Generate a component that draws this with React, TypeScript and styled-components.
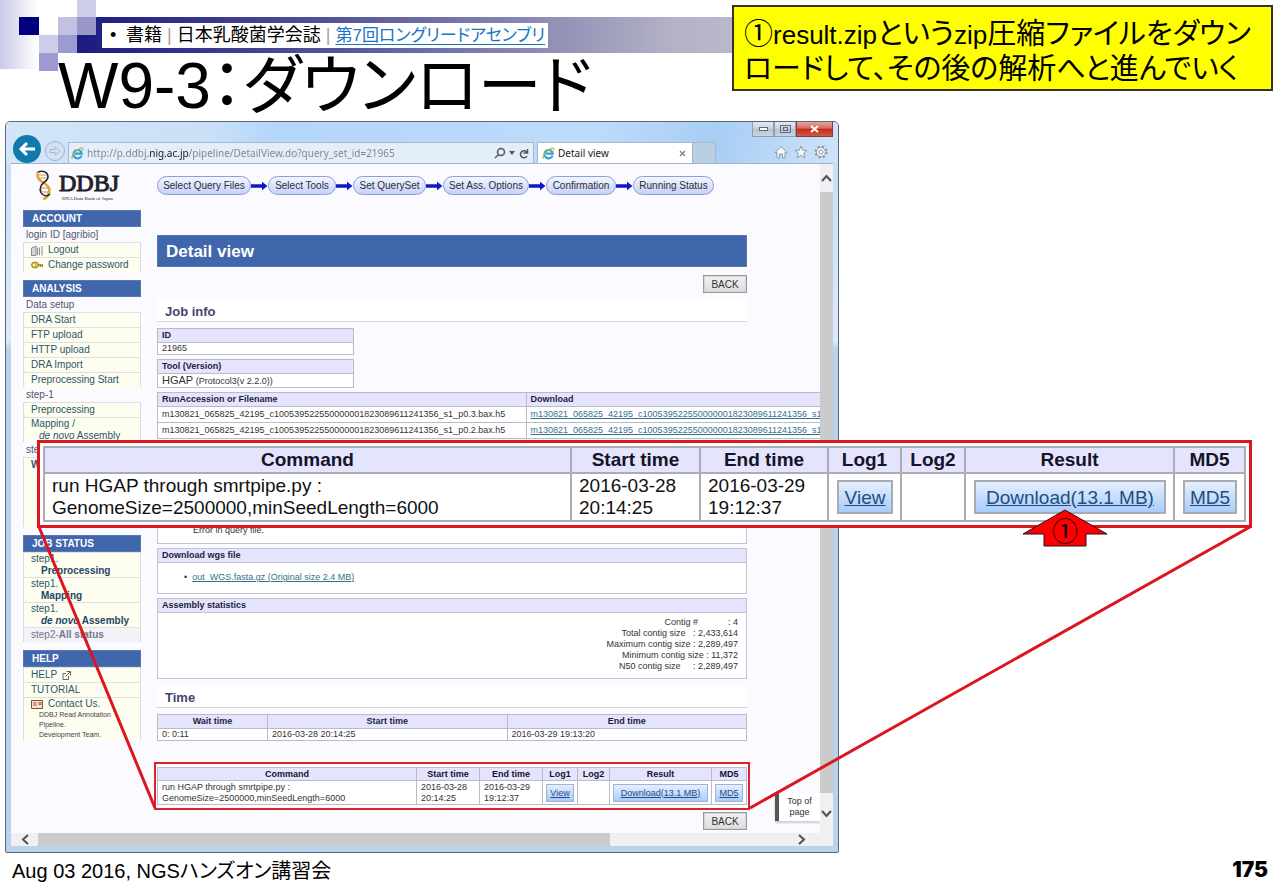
import React from "react";
import styled, { createGlobalStyle, css } from "styled-components";

const SANS = '"Liberation Sans", "Noto Sans CJK JP", sans-serif';
const UI = '"Noto Sans", "Noto Sans CJK JP", sans-serif';

const Global = createGlobalStyle`
  *, *::before, *::after { box-sizing: border-box; }
  body { margin: 0; background: #fff; font-family: ${SANS}; color: #000; }
  button { font-family: inherit; margin: 0; padding: 0; border: 0; background: none; cursor: pointer; }
  table { border-collapse: collapse; border-spacing: 0; }
  h1, h2, h3, p, ul { margin: 0; padding: 0; }
`;

/* ---------- slide ---------- */

const Slide = styled.div`
  min-height: 100vh;
  overflow: hidden;
`;

const Header = styled.header`
  position: relative;
  display: flex;
  justify-content: space-between;
  height: 121px;
`;

const Band = styled.div`
  position: absolute;
  z-index: -1;
  inset: 17px 6px auto 77px;
  height: 36px;
  background: linear-gradient(90deg, #1b1a80 0, #56559a 22%, #b3b2c6 50%, #d6d6df 75%, #fff 100%);
`;

const Mosaic = styled.svg`
  position: absolute;
  z-index: -1;
  top: 0;
  left: 0;
`;

const HeaderMain = styled.div`
  padding: 23px 0 0 58px;
`;

const Crumb = styled.p`
  display: flex;
  align-items: center;
  width: max-content;
  height: 25px;
  margin-left: 44px;
  padding: 0 3px 0 8px;
  background: #fff;
  font-size: 18px;
  line-height: 25px;
  font-feature-settings: "palt";
  white-space: pre;

  a { font-size: 17px; color: #1874c4; text-underline-offset: 3px; text-decoration-thickness: 1px; }
  i { color: #a89f94; font-style: normal; }
  b { font-weight: 400; width: 16px; }
`;

const Title = styled.h1`
  font-size: 64px;
  line-height: 76px;
  font-weight: 400;
  font-feature-settings: "palt";
  white-space: nowrap;
`;

const Note = styled.aside`
  flex: 0 0 541px;
  align-self: flex-start;
  margin: 5px 7px 0 0;
  padding: 10px 10px 3px;
  border: 2px solid #33332a;
  background: #ff0;
  font-size: 29px;
  line-height: 34px;
  font-feature-settings: "palt";
  white-space: nowrap;
`;

const Latin = styled.span`
  font-size: 26px;
`;

const Stage = styled.main`
  position: relative;
  display: grid;
  grid-template-columns: 834fr 441fr;
  padding-left: 5px;
`;

const Footer = styled.footer`
  display: flex;
  justify-content: space-between;
  align-items: center;
  height: 32px;
  padding: 0 12px;
  font-size: 20px;
  font-feature-settings: "palt";
`;

const PageNumber = styled.span`
  font-family: Inter, "DejaVu Sans", sans-serif;
  font-size: 21px;
  font-weight: 900;
`;

/* ---------- browser window ---------- */

const BrowserWindow = styled.section`
  display: flex;
  flex-direction: column;
  min-width: 0;
  padding: 0 5px 6px;
  border: 1px solid #56687a;
  border-radius: 5px 5px 2px 2px;
  background: linear-gradient(180deg, #c3dcf6 0, #dceafa 30%, #b9d3ec 31%, #b9d3ec 100%);
`;

const Chrome = styled.div`
  margin: 0 -5px;
  padding: 0 5px;
  border-radius: 4px 4px 0 0;
  background: linear-gradient(100deg, #d3e5f8 0, #c9e0f8 25%, #b4d6fb 32%, #bedbfa 70%, #a9cdf5 85%, #cfe3f8 100%);
`;

const WindowButtons = styled.div`
  display: flex;
  justify-content: flex-end;
  height: 15px;
`;

const WindowButton = styled.button<{ $close?: boolean }>`
  display: grid;
  place-items: center;
  width: ${p => (p.$close ? 37 : 22)}px;
  height: 15px;
  border: 1px solid ${p => (p.$close ? "#8c3a33" : "#8d9fb3")};
  border-top: 0;
  background: ${p =>
    p.$close
      ? "linear-gradient(180deg, #e4a79f 0, #d5685a 45%, #c02b1b 50%, #cf5a44 100%)"
      : "linear-gradient(180deg, #dfe8f2 0, #ccd6e2 45%, #b6c2d0 50%, #c9d5e2 100%)"};
`;

const NavRow = styled.div`
  display: flex;
  align-items: flex-end;
  height: 26px;
  padding-left: 2px;
`;

const RoundButton = styled.button<{ $small?: boolean }>`
  display: grid;
  place-items: center;
  flex: none;
  width: ${p => (p.$small ? 20 : 28)}px;
  height: ${p => (p.$small ? 20 : 28)}px;
  margin: ${p => (p.$small ? "0 3px 2px 4px" : "0")};
  border-radius: 50%;
  border: ${p => (p.$small ? "1px solid #9db3cc" : "0")};
  background: ${p => (p.$small ? "#d3e3f4" : "#107aad")};
`;

const AddressBar = styled.div`
  display: flex;
  align-items: center;
  flex: 1;
  min-width: 0;
  height: 21px;
  padding: 0 4px 0 2px;
  gap: 3px;
  border: 1px solid #a5bad0;
  border-bottom: 0;
  background: #e3eefa;
`;

const UrlInput = styled.input`
  flex: 1;
  min-width: 0;
  height: 18px;
  padding: 0;
  border: 0;
  outline: 0;
  font-family: ${UI};
  font-size: 10px;
  color: transparent;
  background: linear-gradient(90deg, #7d8389 0 61px, #15181c 61px 101px, #7d8389 101px);
  -webkit-background-clip: text;
  background-clip: text;
`;

const IconButton = styled.button`
  display: grid;
  place-items: center;
  flex: none;
`;

const Tab = styled.div`
  display: flex;
  align-items: center;
  gap: 3px;
  width: 156px;
  height: 21px;
  margin-left: 3px;
  padding: 0 4px 0 4px;
  border: 1px solid #a5bad0;
  border-bottom: 0;
  background: #fff;
  font-family: ${UI};
  font-size: 10px;
  color: #222;

  span { flex: 1; }
`;

const NewTab = styled.button`
  flex: none;
  width: 23px;
  height: 21px;
  border: 1px solid #a5bad0;
  border-left: 0;
  border-bottom: 0;
  background: #b8cfe4;
`;

const Tools = styled.div`
  display: flex;
  gap: 6px;
  padding: 0 5px 4px 58px;
`;

const BrowserBody = styled.div`
  display: flex;
  border-top: 1px solid #9db5cc;
`;

const Viewport = styled.div`
  position: relative;
  display: flex;
  flex: 1;
  min-width: 0;
  gap: 16px;
  padding: 0 73px 0 12px;
  overflow: hidden;
  background: #fbfaff;
`;

const VScroll = styled.div`
  display: flex;
  flex-direction: column;
  width: 13px;
  background: #f0eff1;
`;

const HScroll = styled.div`
  display: flex;
  height: 13px;
  background: #f0eff1;
`;

const Thumb = styled.div<{ $grow: number }>`
  flex: ${p => p.$grow};
  background: #cbcbcc;
`;

const ScrollButton = styled.button<{ $w?: number; $h?: number }>`
  display: grid;
  place-items: center;
  flex: none;
  width: ${p => p.$w ?? 13}px;
  height: ${p => p.$h ?? 13}px;
`;

const Track = styled.div`
  display: flex;
  justify-content: flex-end;
  flex: 198;
  padding-right: 25px;
`;

const TopOfPage = styled.a`
  position: absolute;
  right: 0;
  bottom: 12px;
  width: 45px;
  height: 28px;
  padding-top: 3px;
  border-left: 4px solid #555;
  background: #fff;
  box-shadow: 0 2px 2px #8886;
  font-size: 9px;
  line-height: 11px;
  text-align: center;
  text-decoration: none;
  color: #333;
`;

/* ---------- sidebar ---------- */

const Sidebar = styled.nav`
  flex: none;
  width: 118px;
  padding-top: 5px;
  font-size: 10px;
  line-height: 15px;
  color: #55556a;
`;

const Logo = styled.div`
  display: flex;
  gap: 5px;
  height: 41px;
  padding-left: 12px;
  color: #221f2a;

  strong {
    display: block;
    font: 400 24px/25px "Liberation Serif", serif;
    -webkit-text-stroke: 1px #221f2a;
    padding-top: 2px;
  }
  small {
    display: block;
    font: 5px/6px "Liberation Serif", serif;
    padding-left: 3px;
    white-space: nowrap;
  }
`;

const MenuHead = styled.h2`
  height: 17px;
  margin-bottom: 0;
  padding-left: 8px;
  border: 1px solid #5679b4;
  background: #4066ac;
  font-size: 10px;
  line-height: 15px;
  color: #fff;
`;

const MenuLabel = styled.p`
  padding-left: 3px;
`;

const MenuList = styled.ul<{ $tall?: boolean }>`
  list-style: none;
  border: solid #dcdce6;
  border-width: 0 1px;
  background: #fdfef0;
  min-height: ${p => (p.$tall ? 70 : 0)}px;

  & + h2 { margin-top: 8px; }
`;

const MenuItem = styled.li<{ $compact?: boolean; $muted?: boolean }>`
  display: flex;
  align-items: center;
  min-height: 15px;
  padding-left: 7px;
  border-top: 1px solid #dedee4;
  line-height: ${p => (p.$compact ? 12 : 14)}px;
  white-space: nowrap;
  ${p => p.$muted && css`background: #f3f2f7; color: #77778a;`}

  a { display: flex; gap: 5px; align-items: center; color: ${p => (p.$muted ? "#77778a" : "#2d5568")}; text-decoration: none; }
`;

const StackLink = styled.a`
  && { display: block; line-height: 12px; }
  span { display: block; padding-left: 8px; }
  b { display: block; padding-left: 10px; color: #1e4763; }
`;

const ContactLines = styled.small`
  display: block;
  padding-left: 8px;
  font-size: 7px;
  line-height: 10px;
  color: #445;
`;

/* ---------- page content ---------- */

const Content = styled.div`
  flex: 1;
  min-width: 0;
  padding: 12px 0 3px;
  font-size: 9px;
  color: #333;
`;

const Steps = styled.ol`
  display: flex;
  margin: 0 0 40px;
  padding: 0;
  list-style: none;

  li { display: flex; align-items: center; }
`;

const StepButton = styled.button<{ $w: number }>`
  width: ${p => p.$w}px;
  height: 19px;
  border: 1px solid #8f9dd8;
  border-radius: 10px;
  background: linear-gradient(180deg, #f4f6ff 0, #c5d2f8 100%);
  font-size: 10px;
  line-height: 17px;
  white-space: nowrap;
  color: #2c2c3c;
`;

const PageTitle = styled.h2`
  height: 32px;
  margin-bottom: 8px;
  padding-left: 8px;
  border: 1px solid #5677b0;
  background: #4066ac;
  font-size: 17px;
  line-height: 32px;
  color: #fff;
`;

const ButtonRow = styled.div`
  display: flex;
  justify-content: flex-end;
`;

const BackButton = styled.button`
  width: 44px;
  height: 18px;
  border: 1px solid #9a9a9e;
  box-shadow: inset 0 0 0 1px #d4d4d6;
  background: linear-gradient(180deg, #f2f2f2 0, #dcdcdc 100%);
  font-size: 10px;
  color: #333;
`;

const Section = styled.h3`
  height: 22px;
  margin: 7px 0 6px;
  padding-left: 8px;
  border-bottom: 1px solid #d6d5e2;
  background: #fff;
  font-size: 13px;
  line-height: 23px;
  color: #45456a;
`;

const Grid = styled.table<{ $w?: string; $row?: number; $center?: boolean }>`
  width: ${p => p.$w ?? "100%"};
  margin-bottom: 4px;
  table-layout: fixed;
  background: #fff;
  font-size: 9px;
  line-height: 11px;

  th, td { border: 1px solid #bcbac8; padding: 0 4px; text-align: left; white-space: nowrap; }
  th { height: 14px; background: #e4e4fc; color: #1c1c3c; text-align: ${p => (p.$center ? "center" : "left")}; }
  td { height: ${p => p.$row ?? 12}px; }
  td a { color: #34708a; }
  big { font-size: 11px; }
`;

const Panel = styled.section`
  margin-bottom: 4px;
  border: 1px solid #c4c2d0;
  background: #fff;

  h4 {
    height: 14px;
    margin: 0;
    padding-left: 4px;
    border-bottom: 1px solid #c4c2d0;
    background: #e4e4fc;
    font-size: 9px;
    line-height: 13px;
    color: #1c1c3c;
  }
  a { color: #34708a; }
`;

const BulletLine = styled.p`
  display: flex;
  gap: 5px;
  height: 30px;
  padding: 8px 0 0 26px;
  line-height: 12px;
`;

const ErrorNote = styled.p`
  display: flex;
  align-items: flex-end;
  height: 99px;
  padding: 0 0 7px 35px;
  line-height: 12px;
`;

const Stats = styled.div`
  display: flex;
  flex-direction: column;
  align-items: flex-end;
  height: 65px;
  padding: 4px 8px 0 0;
  line-height: 11px;
  white-space: pre;
`;

/* ---------- command table, shared by the page and its enlargement ---------- */

const CommandGrid = styled.table<{ $big?: boolean }>`
  width: 100%;
  table-layout: fixed;
  background: #fff;
  font-size: ${p => (p.$big ? 19 : 9)}px;
  line-height: ${p => (p.$big ? 22 : 11)}px;
  color: ${p => (p.$big ? "#111" : "#333")};

  th, td {
    border: ${p => (p.$big ? "2px solid #acacb4" : "1px solid #bcbac8")};
    padding: ${p => (p.$big ? "0 0 0 7px" : "0 0 0 4px")};
    text-align: left;
  }
  th { height: ${p => (p.$big ? 26 : 13)}px; padding: 0; background: #e4e4fc; text-align: center; color: #14142a; }
  td { height: ${p => (p.$big ? 48 : 24)}px; }
  td.link { padding: 0 ${p => (p.$big ? 7 : 3)}px 0 ${p => (p.$big ? 8 : 3)}px; }
`;

const LinkBox = styled.a<{ $big?: boolean }>`
  display: block;
  height: ${p => (p.$big ? 34 : 18)}px;
  border: ${p => (p.$big ? "2px solid #a9abb3" : "1px solid #9fb4d4")};
  background: linear-gradient(180deg, #e6effe 0, #a9cbfb 100%);
  line-height: ${p => (p.$big ? 31 : 16)}px;
  text-align: center;
  white-space: nowrap;
  color: #1c4f80;
`;

const SmallFrame = styled.div`
  margin: 21px -3px 2px;
  padding: 3px 1px 3px 1px;
  border: 2px solid #de2229;
  background: #fff;
`;

const Callout = styled.div`
  position: absolute;
  z-index: 2;
  top: 319px;
  left: 37px;
  right: 28px;
  padding: 3px;
  border: 3px solid #dc161e;
  background: #fff;
`;

const Connectors = styled.svg`
  position: absolute;
  z-index: 1;
  top: 406px;
  left: 37px;
  width: calc(100% - 65px);
  height: 282px;
  pointer-events: none;
`;

const Pointer = styled.svg`
  position: absolute;
  top: 65px;
  right: 140px;
`;

/* ---------- drawings ---------- */

const IeIcon = () => (
  <svg width="13" height="13" viewBox="0 0 13 13" aria-hidden="true">
    <path d="M10.6 8.6A4.2 4.2 0 1 1 10.8 6.6H4" fill="none" stroke="#3b9ed8" strokeWidth="2.1" />
    <path d="M1.4 11.8C-.4 9.6 5 2.6 9.6 1.2c2.6-.6 2.6 1 2 2.4" fill="none" stroke="#9fc13a" strokeWidth="1.2" />
  </svg>
);

const StepArrow = () => (
  <svg width="17" height="10" viewBox="0 0 17 10" aria-hidden="true">
    <path d="M0 3.2h11V.8L16.5 5 11 9.2V6.8H0z" fill="#1414c8" />
  </svg>
);

const Chevron = ({ d }: { d: string }) => (
  <svg width="11" height="11" viewBox="0 0 11 11" aria-hidden="true">
    <path d={d} fill="none" stroke="#505054" strokeWidth="2" />
  </svg>
);

const Helix = () => (
  <svg width="19" height="32" viewBox="0 0 19 32" fill="none" aria-hidden="true">
    <path d="M3 3C1 9 5 12 9 14c5 3 7 7 4 12-1 2-3 4-5 4" stroke="#e2a63a" strokeWidth="2.6" />
    <path d="M3 3c5-2 10 0 10 5 0 4-5 5-7 9-2 5 0 9 5 10 2 0 3-1 4-2" stroke="#2a2630" strokeWidth="1.6" />
    <path d="M4 6h8M4 9h8M7 19h7M6 23h8" stroke="#c79a48" strokeWidth="1" />
  </svg>
);

/* ---------- data ---------- */

const STEPS: [string, number][] = [
  ["Select Query Files", 94],
  ["Select Tools", 68],
  ["Set QuerySet", 73],
  ["Set Ass. Options", 86],
  ["Confirmation", 70],
  ["Running Status", 81],
];

const FILES = [
  "m130821_065825_42195_c100539522550000001823089611241356_s1_p0.3.bax.h5",
  "m130821_065825_42195_c100539522550000001823089611241356_s1_p0.2.bax.h5",
];

const STATS = [
  "Contig #            : 4",
  "Total contig size   : 2,433,614",
  "Maximum contig size : 2,289,497",
  "Minimum contig size : 11,372",
  "N50 contig size     : 2,289,497",
];

const SMALL_COLS = [63, 63, 35, 32, 102, 35];
const BIG_COLS = [129, 128, 73, 64, 209, 71];

function CommandTable({ big }: { big?: boolean }) {
  return (
    <CommandGrid $big={big}>
      <colgroup>
        <col />
        {(big ? BIG_COLS : SMALL_COLS).map((w, i) => (
          <col key={i} width={w} />
        ))}
      </colgroup>
      <thead>
        <tr>
          {["Command", "Start time", "End time", "Log1", "Log2", "Result", "MD5"].map(h => (
            <th key={h} scope="col">{h}</th>
          ))}
        </tr>
      </thead>
      <tbody>
        <tr>
          <td>run HGAP through smrtpipe.py :<br />GenomeSize=2500000,minSeedLength=6000</td>
          <td>2016-03-28<br />20:14:25</td>
          <td>2016-03-29<br />19:12:37</td>
          <td className="link"><LinkBox $big={big} href="#log1">View</LinkBox></td>
          <td />
          <td className="link"><LinkBox $big={big} href="#result">Download(13.1 MB)</LinkBox></td>
          <td className="link"><LinkBox $big={big} href="#md5">MD5</LinkBox></td>
        </tr>
      </tbody>
    </CommandGrid>
  );
}

function SideMenu() {
  return (
    <Sidebar>
      <Logo>
        <Helix />
        <div>
          <strong>DDBJ</strong>
          <small>DNA Data Bank of Japan</small>
        </div>
      </Logo>

      <MenuHead>ACCOUNT</MenuHead>
      <MenuLabel>login ID [agribio]</MenuLabel>
      <MenuList>
        <MenuItem>
          <a href="#logout">
            <svg width="12" height="11" viewBox="0 0 12 11" aria-hidden="true">
              <path d="M.5 3 5 1v9.5H.5zM6.5 2.5V10M8.5 2.5V10M11 1v9.5" fill="#d5d5d5" stroke="#8b8b8b" />
            </svg>
            Logout
          </a>
        </MenuItem>
        <MenuItem>
          <a href="#password">
            <svg width="12" height="10" viewBox="0 0 12 10" aria-hidden="true">
              <ellipse cx="4" cy="5" rx="3.5" ry="3" fill="#d9c23c" stroke="#94822a" />
              <path d="M7 5h5M9.5 5v2M11.5 5v2" stroke="#94822a" strokeWidth="1.6" />
              <circle cx="3" cy="5" r="1" fill="#fff" />
            </svg>
            Change password
          </a>
        </MenuItem>
      </MenuList>

      <MenuHead>ANALYSIS</MenuHead>
      <MenuLabel>Data setup</MenuLabel>
      <MenuList>
        {["DRA Start", "FTP upload", "HTTP upload", "DRA Import", "Preprocessing Start"].map(t => (
          <MenuItem key={t}><a href="#setup">{t}</a></MenuItem>
        ))}
      </MenuList>
      <MenuLabel>step-1</MenuLabel>
      <MenuList>
        <MenuItem><a href="#pre">Preprocessing</a></MenuItem>
        <MenuItem $compact>
          <StackLink href="#mapping">Mapping /<span><em>de novo</em> Assembly</span></StackLink>
        </MenuItem>
      </MenuList>
      <MenuLabel>step-2</MenuLabel>
      <MenuList $tall>
        <MenuItem><a href="#workflow"><b>Workflow</b></a></MenuItem>
      </MenuList>

      <MenuHead>JOB STATUS</MenuHead>
      <MenuList>
        <MenuItem><StackLink href="#s1">step1.<b>Preprocessing</b></StackLink></MenuItem>
        <MenuItem><StackLink href="#s2">step1.<b>Mapping</b></StackLink></MenuItem>
        <MenuItem><StackLink href="#s3">step1.<b><em>de novo</em> Assembly</b></StackLink></MenuItem>
        <MenuItem $muted><a href="#s4"><span>step2-<strong>All status</strong></span></a></MenuItem>
      </MenuList>

      <MenuHead>HELP</MenuHead>
      <MenuList>
        <MenuItem>
          <a href="#help">
            HELP
            <svg width="9" height="9" viewBox="0 0 9 9" fill="none" stroke="#666" aria-hidden="true">
              <path d="M4 2.5H1v6h5.5V5M4.5.5h4v4M3.5 5.5l5-5" />
            </svg>
          </a>
        </MenuItem>
        <MenuItem><a href="#tutorial">TUTORIAL</a></MenuItem>
        <MenuItem $compact>
          <div>
            <a href="#contact">
              <svg width="12" height="9" viewBox="0 0 12 9" aria-hidden="true">
                <path d="M.5.5h11v8H.5z" fill="#f6e3d5" stroke="#8a4a32" />
                <path d="M2 3h4M2 5h4M8 2.5h2v2H8z" stroke="#b05a3c" fill="none" />
              </svg>
              Contact Us.
            </a>
            <ContactLines>DDBJ Read Annotation<br />Pipeline.<br />Development Team.</ContactLines>
          </div>
        </MenuItem>
      </MenuList>
    </Sidebar>
  );
}

function DetailPage() {
  return (
    <Content>
      <Steps>
        {STEPS.map(([label, w], i) => (
          <li key={label}>
            {i > 0 && <StepArrow />}
            <StepButton $w={w}>{label}</StepButton>
          </li>
        ))}
      </Steps>
      <PageTitle>Detail view</PageTitle>
      <ButtonRow><BackButton>BACK</BackButton></ButtonRow>

      <Section>Job info</Section>
      <Grid $w="197px">
        <thead><tr><th scope="col">ID</th></tr></thead>
        <tbody><tr><td>21965</td></tr></tbody>
      </Grid>
      <Grid $w="197px" $row={14}>
        <thead><tr><th scope="col">Tool (Version)</th></tr></thead>
        <tbody><tr><td><big>HGAP</big> (Protocol3(v 2.2.0))</td></tr></tbody>
      </Grid>
      <Grid $w="738px" $row={16}>
        <thead>
          <tr>
            <th scope="col">RunAccession or Filename</th>
            <th scope="col">Download</th>
          </tr>
        </thead>
        <tbody>
          {FILES.map(f => (
            <tr key={f}>
              <td>{f}</td>
              <td><a href="#file">{f}</a></td>
            </tr>
          ))}
        </tbody>
      </Grid>

      <Panel><ErrorNote>Error in query file.</ErrorNote></Panel>
      <Panel>
        <h4>Download wgs file</h4>
        <BulletLine><span>•</span><a href="#wgs">out_WGS.fasta.gz (Original size 2.4 MB)</a></BulletLine>
      </Panel>
      <Panel>
        <h4>Assembly statistics</h4>
        <Stats>{STATS.map(s => <span key={s}>{s}</span>)}</Stats>
      </Panel>

      <Section>Time</Section>
      <Grid $center>
        <colgroup><col width="110" /><col /><col /></colgroup>
        <thead>
          <tr>
            <th scope="col">Wait time</th>
            <th scope="col">Start time</th>
            <th scope="col">End time</th>
          </tr>
        </thead>
        <tbody>
          <tr>
            <td>0: 0:11</td>
            <td>2016-03-28 20:14:25</td>
            <td>2016-03-29 19:13:20</td>
          </tr>
        </tbody>
      </Grid>

      <SmallFrame><CommandTable /></SmallFrame>
      <ButtonRow><BackButton>BACK</BackButton></ButtonRow>
    </Content>
  );
}

export default function App() {
  return (
    <Slide>
      <Global />
      <Header>
        <Band />
        <Mosaic width="100" height="72" viewBox="0 0 100 72" aria-hidden="true">
          <defs>
            <linearGradient id="fade">
              <stop offset="0" stopColor="#c9c9ea" />
              <stop offset="1" stopColor="#fff" />
            </linearGradient>
          </defs>
          <rect width="38" height="69" fill="url(#fade)" />
          <rect x="19" y="17" width="20" height="18" fill="#000080" />
          <rect x="77" width="19" height="17" fill="#cdcce9" />
          <rect x="58" y="17" width="19" height="18" fill="#c3c1e2" />
          <rect x="77" y="17" width="19" height="18" fill="#9a98c8" />
          <rect x="39" y="35" width="19" height="18" fill="#cdcce9" />
          <rect x="58" y="35" width="19" height="18" fill="#9c9ad0" />
          <rect x="39" y="53" width="19" height="18" fill="#9c9ad0" />
        </Mosaic>
        <HeaderMain>
          <Crumb>
            <b>•</b>
            <span>
              書籍 <i>|</i> 日本乳酸菌学会誌 <i>|</i> <a href="#lesson7">第7回ロングリードアセンブリ</a>
            </span>
          </Crumb>
          <Title>W9-3：ダウンロード</Title>
        </HeaderMain>
        <Note>
          ①<Latin>result.zip</Latin>という<Latin>zip</Latin>圧縮ファイルをダウン
          <br />
          ロードして、その後の解析へと進んでいく
        </Note>
      </Header>

      <Stage>
        <BrowserWindow>
          <Chrome>
            <WindowButtons>
              <WindowButton aria-label="Minimize">
                <svg width="9" height="4"><rect x=".5" y=".5" width="8" height="3" fill="#fff" stroke="#667" /></svg>
              </WindowButton>
              <WindowButton aria-label="Maximize">
                <svg width="11" height="8" fill="none" stroke="#667"><rect x=".5" y=".5" width="10" height="7" /><rect x="3.5" y="2.5" width="4" height="3" /></svg>
              </WindowButton>
              <WindowButton $close aria-label="Close">
                <svg width="9" height="8"><path d="M1 1l7 6M8 1L1 7" stroke="#fff" strokeWidth="2" /></svg>
              </WindowButton>
            </WindowButtons>
            <NavRow>
              <RoundButton aria-label="Back">
                <svg width="18" height="16" fill="none" stroke="#fff" strokeWidth="3"><path d="M17 8H3M9 2L3 8l6 6" /></svg>
              </RoundButton>
              <RoundButton $small aria-label="Forward">
                <svg width="12" height="10" fill="none" stroke="#a4b8ce"><path d="M1 3.5h5V1l5 4-5 4V6.5H1z" /></svg>
              </RoundButton>
              <AddressBar>
                <IeIcon />
                <UrlInput
                  aria-label="Address"
                  defaultValue="http://p.ddbj.nig.ac.jp/pipeline/DetailView.do?query_set_id=21965"
                />
                <IconButton aria-label="Search">
                  <svg width="12" height="12" fill="none" stroke="#555" strokeWidth="1.5"><circle cx="7" cy="5" r="3.5" /><path d="M4.5 7.5L1 11" /></svg>
                </IconButton>
                <IconButton aria-label="Search options">
                  <svg width="6" height="4"><path d="M0 0h6L3 4z" fill="#555" /></svg>
                </IconButton>
                <IconButton aria-label="Reload">
                  <svg width="11" height="11" fill="none" stroke="#555" strokeWidth="1.5"><path d="M9 4.5A3.5 3.5 0 1 0 9 8M9.5 1v4h-4" /></svg>
                </IconButton>
              </AddressBar>
              <Tab>
                <IeIcon />
                <span>Detail view</span>
                <IconButton aria-label="Close tab">
                  <svg width="9" height="7"><path d="M1 1l5 5M6 1L1 6" stroke="#888" strokeWidth="1.5" /></svg>
                </IconButton>
              </Tab>
              <NewTab aria-label="New tab" />
              <Tools>
                <IconButton aria-label="Home">
                  <svg width="14" height="14" fill="#f3f8fd" stroke="#8d9aa8"><path d="M1 7.5L7 1.5l6 6h-2V13H8.5V9h-3v4H3V7.5z" /></svg>
                </IconButton>
                <IconButton aria-label="Favorites">
                  <svg width="14" height="14" fill="#f3f8fd" stroke="#8d9aa8"><path d="M7 1l1.7 4.2 4.3.3-3.3 2.9 1.1 4.4L7 10.4l-3.8 2.4 1.1-4.4L1 5.5l4.3-.3z" /></svg>
                </IconButton>
                <IconButton aria-label="Settings">
                  <svg width="14" height="14" fill="#f3f8fd" stroke="#8d9aa8"><circle cx="7" cy="7" r="5.5" strokeWidth="2" strokeDasharray="2.5 1.82" /><circle cx="7" cy="7" r="4.5" /><circle cx="7" cy="7" r="2" /></svg>
                </IconButton>
              </Tools>
            </NavRow>
          </Chrome>

          <BrowserBody>
            <Viewport>
              <SideMenu />
              <DetailPage />
              <TopOfPage href="#top">Top of<br />page</TopOfPage>
            </Viewport>
            <VScroll>
              <ScrollButton $h={28} aria-label="Scroll up"><Chevron d="M1 8l4.5-5L10 8" /></ScrollButton>
              <Thumb $grow={1} />
              <ScrollButton $h={40} aria-label="Scroll down"><Chevron d="M1 3l4.5 5L10 3" /></ScrollButton>
            </VScroll>
          </BrowserBody>
          <HScroll>
            <ScrollButton $w={27} aria-label="Scroll left"><Chevron d="M9 1L4 5.5 9 10" /></ScrollButton>
            <Thumb $grow={572} />
            <Track>
              <ScrollButton aria-label="Scroll right"><Chevron d="M3 1l5 4.5L3 10" /></ScrollButton>
            </Track>
          </HScroll>
        </BrowserWindow>

        <Connectors viewBox="0 0 1215 282" preserveAspectRatio="none" aria-hidden="true">
          <path d="M2 0L118 281M1213 0L713 281" fill="none" stroke="#dc161e" strokeWidth="3" />
        </Connectors>

        <Callout>
          <CommandTable big />
          <Pointer width="88" height="40" viewBox="0 0 88 40" aria-hidden="true">
            <path d="M44 2L86 26H65V38H23V26H2z" fill="#f00" stroke="#201010" />
            <text x="44" y="33" textAnchor="middle" fontSize="26" fontFamily="Noto Sans CJK JP, sans-serif">①</text>
          </Pointer>
        </Callout>
      </Stage>

      <Footer>
        <span>Aug 03 2016, NGSハンズオン講習会</span>
        <PageNumber>175</PageNumber>
      </Footer>
    </Slide>
  );
}
